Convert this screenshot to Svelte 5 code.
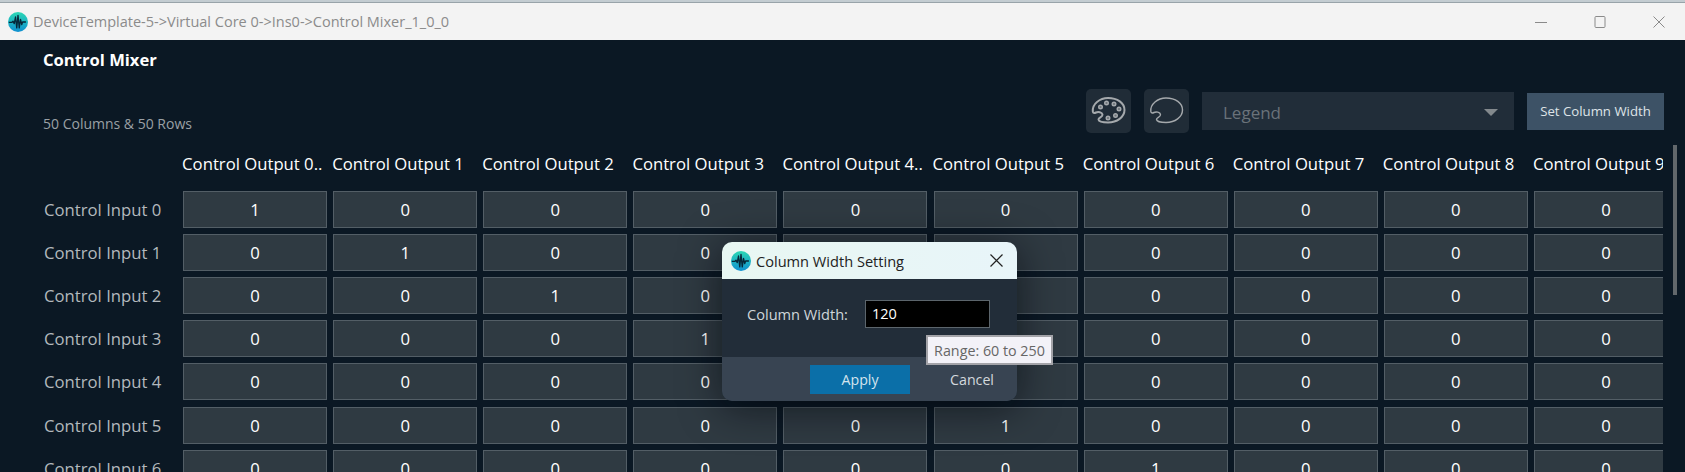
<script lang="ts">
  const outputs = Array.from({ length: 10 }, (_, i) => `Control Output ${i}`);
  const truncated = [0, 4];
  const inputs = Array.from({ length: 7 }, (_, i) => `Control Input ${i}`);
  const paletteOutline =
    'M1.8 15.500C1.500 11.500 3 8.500 6 6 9.500 3 13.500 2 17 2c9.500 0 16.500 5 16.500 12s-7.500 12.500-16.500 12.500c-4 0-9-.5-9.500-3-.3-2 4.500-2.500 4-5-.5-2.500-4.500-3-6.500-2-1 .5-3 1-3.200-1z';
</script>

{#snippet logo(size)}
  <svg class="logo" width={size} height={size} viewBox="0 0 24 24">
    <defs>
      <linearGradient id="logo-grad-{size}" x1="0" y1="0" x2="0" y2="1">
        <stop offset="0" stop-color="#2bd8b4" />
        <stop offset="1" stop-color="#0f8fd0" />
      </linearGradient>
    </defs>
    <circle cx="12" cy="12" r="12" fill="url(#logo-grad-{size})" />
    <path d="M1 12.500h3.500l1.500-1.500 1.500 3 1.500-8 1.500 13 1.500-15 1.500 15 1.500-10 1.500 6 1-3h4" fill="none" stroke="#06283a" stroke-width="1.600" stroke-linejoin="round" />
  </svg>
{/snippet}

<div class="window">
  <div class="behind"></div>
  <header class="titlebar">
    <div class="title-left">
      {@render logo(20)}
      <span class="title">DeviceTemplate-5-&gt;Virtual Core 0-&gt;Ins0-&gt;Control Mixer_1_0_0</span>
    </div>
    <div class="win-controls">
      <svg width="12" height="12" viewBox="0 0 12 12"><path d="M0 6.500h12" stroke="#8a8a8a" /></svg>
      <svg width="12" height="12" viewBox="0 0 12 12"><rect x="1" y="0.500" width="10" height="11" rx="1" fill="none" stroke="#8a8a8a" /></svg>
      <svg width="12" height="12" viewBox="0 0 12 12"><path d="M0.500 0.500l11 11M11.500 0.500l-11 11" stroke="#8a8a8a" /></svg>
    </div>
  </header>

  <main class="content">
    <h1>Control Mixer</h1>
    <div class="toolbar">
      <span class="count">50 Columns &amp; 50 Rows</span>
      <div class="tools">
        <button class="icon-btn" aria-label="Palette">
          <svg width="36" height="30" viewBox="0 0 36 30" fill="none" stroke="#a5a9ac" stroke-width="2">
            <path d={paletteOutline} />
            <g stroke-width="1.400" fill="#6d7479">
              <circle cx="15.500" cy="7" r="1.800" /><circle cx="23" cy="8" r="1.800" /><circle cx="9.500" cy="11" r="1.800" />
              <circle cx="28" cy="13" r="1.800" /><circle cx="24.500" cy="19.500" r="1.800" /><circle cx="17" cy="22" r="1.800" />
            </g>
          </svg>
        </button>
        <button class="icon-btn" aria-label="Palette outline">
          <svg width="36" height="30" viewBox="0 0 36 30" fill="none" stroke="#a5a9ac" stroke-width="1.400">
            <path d={paletteOutline} />
          </svg>
        </button>
        <div class="legend">
          <span>Legend</span>
          <i class="caret"></i>
        </div>
        <button class="set-width">Set Column Width</button>
      </div>
    </div>

    <div class="matrix">
      <div></div>
      {#each outputs as out, i}
        <div class="col-head">{truncated.includes(i) ? out + '..' : out}</div>
      {/each}
      {#each inputs as input, r}
        <div class="row-head">{input}</div>
        {#each outputs as _, c}
          <div class="cell">{r === c ? 1 : 0}</div>
        {/each}
      {/each}
    </div>
    <div class="scrollbar"></div>
  </main>

  <div class="dialog">
    <div class="dlg-head">
      {@render logo(20)}
      <span class="dlg-title">Column Width Setting</span>
      <svg width="13" height="13" viewBox="0 0 13 13"><path d="M0.500 0.500l12 12M12.500 0.500l-12 12" stroke="#222" stroke-width="1.200" /></svg>
    </div>
    <div class="dlg-body">
      <span class="dlg-label">Column Width:</span>
      <input class="dlg-input" value="120" />
    </div>
    <div class="dlg-foot">
      <button class="apply">Apply</button>
      <button class="cancel">Cancel</button>
    </div>
    <div class="tooltip">Range: 60 to 250</div>
  </div>
</div>

<style>
  :global(body) {
    margin: 0;
    background: #0b1824;
    font-family: "Open Sans", "Noto Sans", sans-serif;
  }

  .window {
    position: relative;
    width: 1685px;
    height: 472px;
    overflow: hidden;
    display: flex;
    flex-direction: column;
    background: #0b1824;
  }

  .behind {
    height: 3px;
    box-sizing: border-box;
    flex: none;
    background: #c3ccd1;
    border-bottom: 1px solid #98a3a9;
  }

  .titlebar {
    height: 37px;
    flex: none;
    display: flex;
    align-items: center;
    justify-content: space-between;
    background: #f3f3f3;
    padding: 0 20px 0 8px;
  }

  .title-left {
    display: flex;
    align-items: center;
    gap: 5px;
  }

  .title {
    font-size: 14.500px;
    color: #8b8b8b;
  }

  .win-controls {
    display: flex;
    gap: 47px;
    align-items: center;
  }

  .content {
    position: relative;
    flex: 1;
    min-height: 0;
    overflow: hidden;
    padding: 0 0 0 43px;
  }

  h1 {
    margin: 0;
    padding-top: 9px;
    font-size: 16.600px;
    line-height: 21px;
    font-weight: 700;
    color: #fff;
  }

  .toolbar {
    display: flex;
    justify-content: space-between;
    align-items: flex-end;
    margin-top: 19px;
    width: 1621px;
  }

  .count {
    font-size: 14px;
    color: #9aa0a5;
    line-height: 18px;
  }

  .tools {
    display: flex;
    align-items: center;
    gap: 13px;
  }

  .icon-btn {
    width: 45px;
    height: 44px;
    padding: 0;
    border: 0;
    border-radius: 5px;
    background: #202c37;
    display: flex;
    align-items: center;
    justify-content: center;
  }

  .legend {
    width: 312px;
    height: 38px;
    padding: 2px 16px 0 21px;
    box-sizing: border-box;
    display: flex;
    align-items: center;
    justify-content: space-between;
    background: #212d39;
    font-size: 17px;
    color: #6a7279;
  }

  .caret {
    width: 0;
    height: 0;
    border-left: 7px solid transparent;
    border-right: 7px solid transparent;
    border-top: 7px solid #83898d;
  }

  .set-width {
    width: 137px;
    height: 37px;
    padding: 0;
    border: 0;
    background: #3d5266;
    color: #dfe4e8;
    font: 13.200px "Open Sans", sans-serif;
  }

  .matrix {
    display: grid;
    grid-template-columns: 134px repeat(10, 144px);
    grid-template-rows: 40px;
    grid-auto-rows: 37px;
    column-gap: 6.100px;
    row-gap: 6.100px;
    width: 1620px;
    height: 340px;
    margin-top: 12px;
    overflow: hidden;
  }

  .col-head {
    font-size: 16.700px;
    line-height: 37px;
    color: #fff;
    white-space: nowrap;
    margin-left: -1px;
  }

  .row-head {
    font-size: 16.700px;
    line-height: 38px;
    color: #b3b9bd;
    white-space: nowrap;
    padding-left: 1px;
  }

  .cell {
    box-sizing: border-box;
    border: 1px solid #535e66;
    background: #2f3a42;
    color: #fff;
    font-size: 16.700px;
    line-height: 35px;
    text-align: center;
  }

  .scrollbar {
    position: absolute;
    top: 105px;
    left: 1673px;
    width: 4px;
    height: 150px;
    background: #62676b;
  }

  .dialog {
    position: absolute;
    top: 242px;
    left: 722px;
    width: 295px;
    height: 159px;
    display: flex;
    flex-direction: column;
    border-radius: 10px;
    background: #222d39;
    box-shadow: 0 6px 40px rgba(0, 5, 10, 0.6);
  }

  .dlg-head {
    height: 37px;
    flex: none;
    display: flex;
    align-items: center;
    gap: 5px;
    padding: 0 14px 0 9px;
    background: linear-gradient(90deg, #e8f7f2, #e8f5f9);
    border-radius: 10px 10px 0 0;
  }

  .dlg-title {
    flex: 1;
    font-size: 14.600px;
    color: #222;
  }

  .dlg-body {
    flex: 1;
    display: flex;
    align-items: center;
    padding: 0 27px 0 25px;
    justify-content: space-between;
  }

  .dlg-label {
    font-size: 14.600px;
    color: #cfd6da;
    margin-top: -8px;
  }

  .dlg-input {
    box-sizing: border-box;
    width: 125px;
    height: 28px;
    margin-top: -9px;
    padding: 0 6px;
    background: #000;
    border: 1px solid #5c656c;
    color: #fff;
    font: 14.500px "Open Sans", sans-serif;
    outline: none;
  }

  .dlg-foot {
    height: 44px;
    flex: none;
    display: flex;
    align-items: center;
    padding: 0 0 0 88px;
    background: #384452;
    border-radius: 0 0 10px 10px;
    box-sizing: border-box;
  }

  .apply {
    flex: none;
    width: 100px;
    height: 29px;
    padding: 0;
    border: 0;
    background: #0b6fa8;
    color: #d5e4ee;
    font: 14.200px "Open Sans", sans-serif;
  }

  .cancel {
    flex: none;
    width: 100px;
    margin-left: 12px;
    padding: 0;
    border: 0;
    background: transparent;
    color: #d4d9dd;
    font: 14.200px "Open Sans", sans-serif;
  }

  .tooltip {
    position: absolute;
    left: 204px;
    top: 93px;
    width: 127px;
    height: 30px;
    box-sizing: border-box;
    display: flex;
    align-items: center;
    justify-content: center;
    background: #f3f2f8;
    border: 2px solid #a3a3a8;
    font-size: 14.300px;
    color: #666;
  }
</style>
